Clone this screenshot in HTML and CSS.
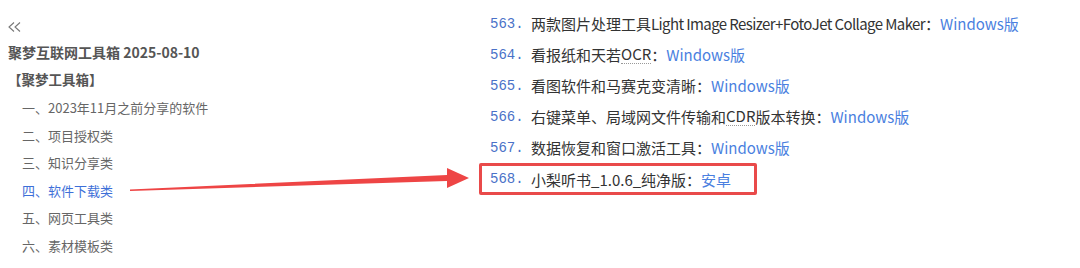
FILE: index.html
```html
<!DOCTYPE html>
<html lang="zh-CN">
<head>
  <meta charset="UTF-8" />
  <meta name="viewport" content="width=device-width, initial-scale=1" />
  <title>聚梦互联网工具箱</title>
  <link rel="stylesheet" href="styles.css">
</head>
<body>
  <div class="page">
    <div class="sidebar">
      <div class="collapse">
        <svg width="13" height="10" viewBox="0 0 13 10">
          <polyline points="6,0.5 1,5 6,9.5" fill="none" stroke="#777" stroke-width="1.1"/>
          <polyline points="12,0.5 7,5 12,9.5" fill="none" stroke="#777" stroke-width="1.1"/>
        </svg>
      </div>
      <h1>聚梦互联网工具箱 2025-08-10</h1>
      <h2>【聚梦工具箱】</h2>
      <ul class="toc">
        <li>一、2023年11月之前分享的软件</li>
        <li>二、项目授权类</li>
        <li>三、知识分享类</li>
        <li class="active">四、软件下载类</li>
        <li>五、网页工具类</li>
        <li>六、素材模板类</li>
      </ul>
    </div>

    <ol class="list">
      <li><span class="num">563.</span>两款图片处理工具<span class="latin">Light Image Resizer+FotoJet Collage Maker</span>：<a href="#">Windows版</a></li>
      <li><span class="num">564.</span>看报纸和天若<span class="dotted">OCR</span>：<a href="#">Windows版</a></li>
      <li><span class="num">565.</span>看图软件和马赛克变清晰：<a href="#">Windows版</a></li>
      <li><span class="num">566.</span>右键菜单、局域网文件传输和<span class="dotted">CDR</span>版本转换：<a href="#">Windows版</a></li>
      <li><span class="num">567.</span>数据恢复和窗口激活工具：<a href="#">Windows版</a></li>
      <li class="marked"><span class="num">568.</span>小梨听书_1.0.6_纯净版：<a href="#">安卓</a></li>
    </ol>
  </div>

  <!-- red annotation arrow -->
  <svg class="arrow" width="480" height="40" viewBox="0 0 480 40">
    <polygon points="130,29.5 447,15 447,8 469,18 447,28 447,21 130,31" fill="#ee4545"/>
  </svg>
</body>
</html>
```

FILE: styles.css
```css
body {
  margin: 0;
  background: #fff;
  font-family: "Noto Sans CJK SC", "Noto Sans", sans-serif;
  color: #333;
}
.page {
  display: flex;
  height: 268px;
}
.sidebar {
  width: 462px;
  padding-left: 8px;
  padding-top: 12px;
}
.collapse {
  height: 26px;
}
.collapse svg {
  display: block;
  padding-top: 10px;
}
h1 {
  margin: 0;
  font-size: 14px;
  line-height: 28px;
  color: #555;
  font-weight: bold;
}
h2 {
  margin: 0;
  font-size: 13.5px;
  line-height: 27px;
  color: #555;
  font-weight: bold;
}
.toc {
  list-style: none;
  margin: 0;
  padding: 1px 0 0 14px;
}
.toc li {
  font-size: 13px;
  line-height: 27.6px;
  color: #666;
}
.toc li.active {
  color: #3d6fd8;
}
.list {
  list-style: none;
  margin: 0;
  padding: 8px 0 0 20px;
}
.list li {
  font-size: 15px;
  height: 31px;
  display: flex;
  align-items: center;
  white-space: nowrap;
}
.list li.marked {
  height: 26px;
  width: 256px;
  padding: 0 8px;
  margin-left: -11px;
  border: 3px solid #e94a4a;
  border-radius: 2px;
}
.num {
  font-family: "Liberation Mono", monospace;
  font-size: 14px;
  color: #4a72c8;
  width: 41px;
  flex: none;
}
.latin {
  letter-spacing: -0.6px;
}
.list a {
  color: #4a7fe0;
  text-decoration: none;
}
.dotted {
  border-bottom: 1px dotted #999;
  line-height: 1.2;
}
.arrow {
  position: absolute;
  left: 0;
  top: 160px;
}
```
